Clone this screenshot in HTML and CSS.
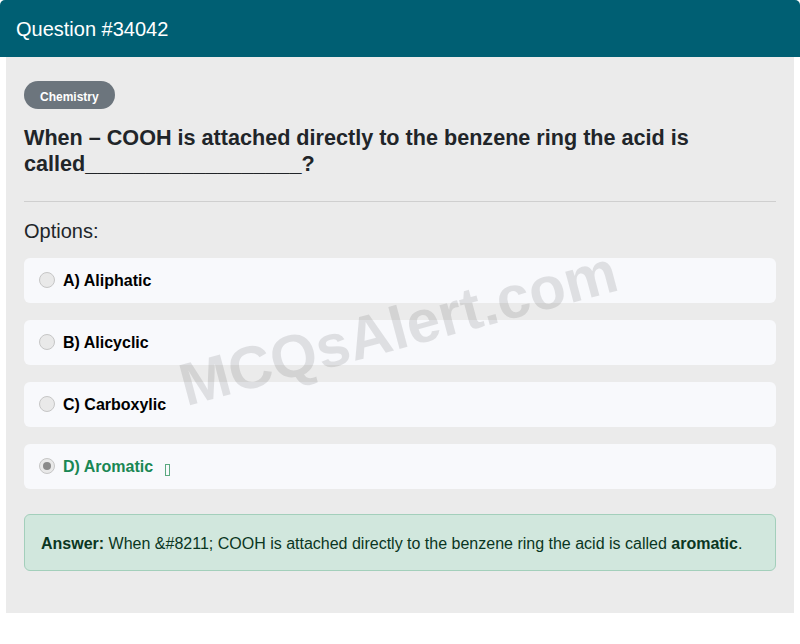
FILE: index.html
```html
<!DOCTYPE html>
<html>
<head>
<meta charset="utf-8">
<link rel="stylesheet" href="styles.css">
</head>
<body>
<div class="card">
  <div class="card-header">Question #34042</div>
  <div class="card-body">
    <span class="badge">Chemistry</span>
    <h2 class="question">When – COOH is attached directly to the benzene ring the acid is called__________________?</h2>
    <hr class="divider">
    <div class="options-label">Options:</div>
    <div class="options">
      <div class="option"><span class="radio"></span><span class="opt-text">A) Aliphatic</span></div>
      <div class="option"><span class="radio"></span><span class="opt-text">B) Alicyclic</span></div>
      <div class="option"><span class="radio"></span><span class="opt-text">C) Carboxylic</span></div>
      <div class="option correct"><span class="radio checked"></span><span class="opt-text">D) Aromatic</span><span class="tofu"></span></div>
    </div>
    <div class="answer"><strong>Answer:</strong> When &amp;#8211; COOH is attached directly to the benzene ring the acid is called <strong>aromatic</strong>.</div>
    <div class="watermark">MCQsAlert.com</div>
  </div>
</div>
</body>
</html>
```

FILE: styles.css
```css
* { box-sizing: border-box; }
html, body { margin: 0; padding: 0; background: #fff; }
body { font-family: "Liberation Sans", Arial, sans-serif; color: #212529; }

.card { width: 800px; }

.card-header {
  height: 57px;
  background: #005f73;
  color: #fff;
  font-size: 20px;
  line-height: 59px;
  padding-left: 16px;
  border-radius: 5px 5px 0 0;
}

.card-body {
  position: relative;
  margin: 0 6px;
  background: #ebebeb;
  padding: 24px 18px 42px;
  overflow: hidden;
}

.badge {
  display: inline-block;
  height: 28px;
  line-height: 32px;
  padding: 0 16px;
  border-radius: 14px;
  background: #6c757d;
  color: #fff;
  font-size: 12px;
  font-weight: bold;
  vertical-align: top;
}

.question {
  margin: 16px 0 0;
  font-size: 21.6px;
  font-weight: bold;
  line-height: 26.4px;
  color: #212529;
}

.divider {
  margin: 23px 0 0;
  border: 0;
  border-top: 1px solid #cfcfcf;
}

.options-label {
  margin-top: 17px;
  font-size: 20px;
  line-height: 24px;
}

.options {
  margin-top: 15px;
  display: flex;
  flex-direction: column;
  gap: 17px;
}

.option {
  position: relative;
  z-index: 0;
  display: flex;
  align-items: center;
  height: 45px;
  padding-left: 15px;
  background: #f8f9fc;
  border-radius: 6px;
  font-size: 16px;
  font-weight: bold;
  color: #000;
}

.opt-text { padding-top: 2px; }

.radio {
  width: 16px;
  height: 16px;
  border-radius: 50%;
  border: 1px solid #c6c6c6;
  background: #e9e9e9;
  margin-right: 8px;
  display: flex;
  align-items: center;
  justify-content: center;
}

.radio.checked::after {
  content: "";
  width: 8px;
  height: 8px;
  border-radius: 50%;
  background: #8a8a8a;
}

.option.correct { color: #198754; }

.tofu {
  display: inline-block;
  width: 5px;
  height: 12px;
  border: 1px solid #5aa97f;
  margin-left: 12px;
  margin-top: 8px;
}

.answer {
  margin-top: 25px;
  background: #d1e7dd;
  border: 1px solid #a3cfbb;
  border-radius: 6px;
  padding: 19px 16px 17px;
  font-size: 16px;
  line-height: 19px;
  color: #0a3622;
}

.watermark {
  position: absolute;
  left: 166px;
  top: 296px;
  font-size: 60px;
  font-weight: bold;
  color: rgba(0, 0, 0, 0.1);
  transform: rotate(-15deg);
  transform-origin: left top;
  white-space: nowrap;
  pointer-events: none;
  z-index: 1;
}
```
